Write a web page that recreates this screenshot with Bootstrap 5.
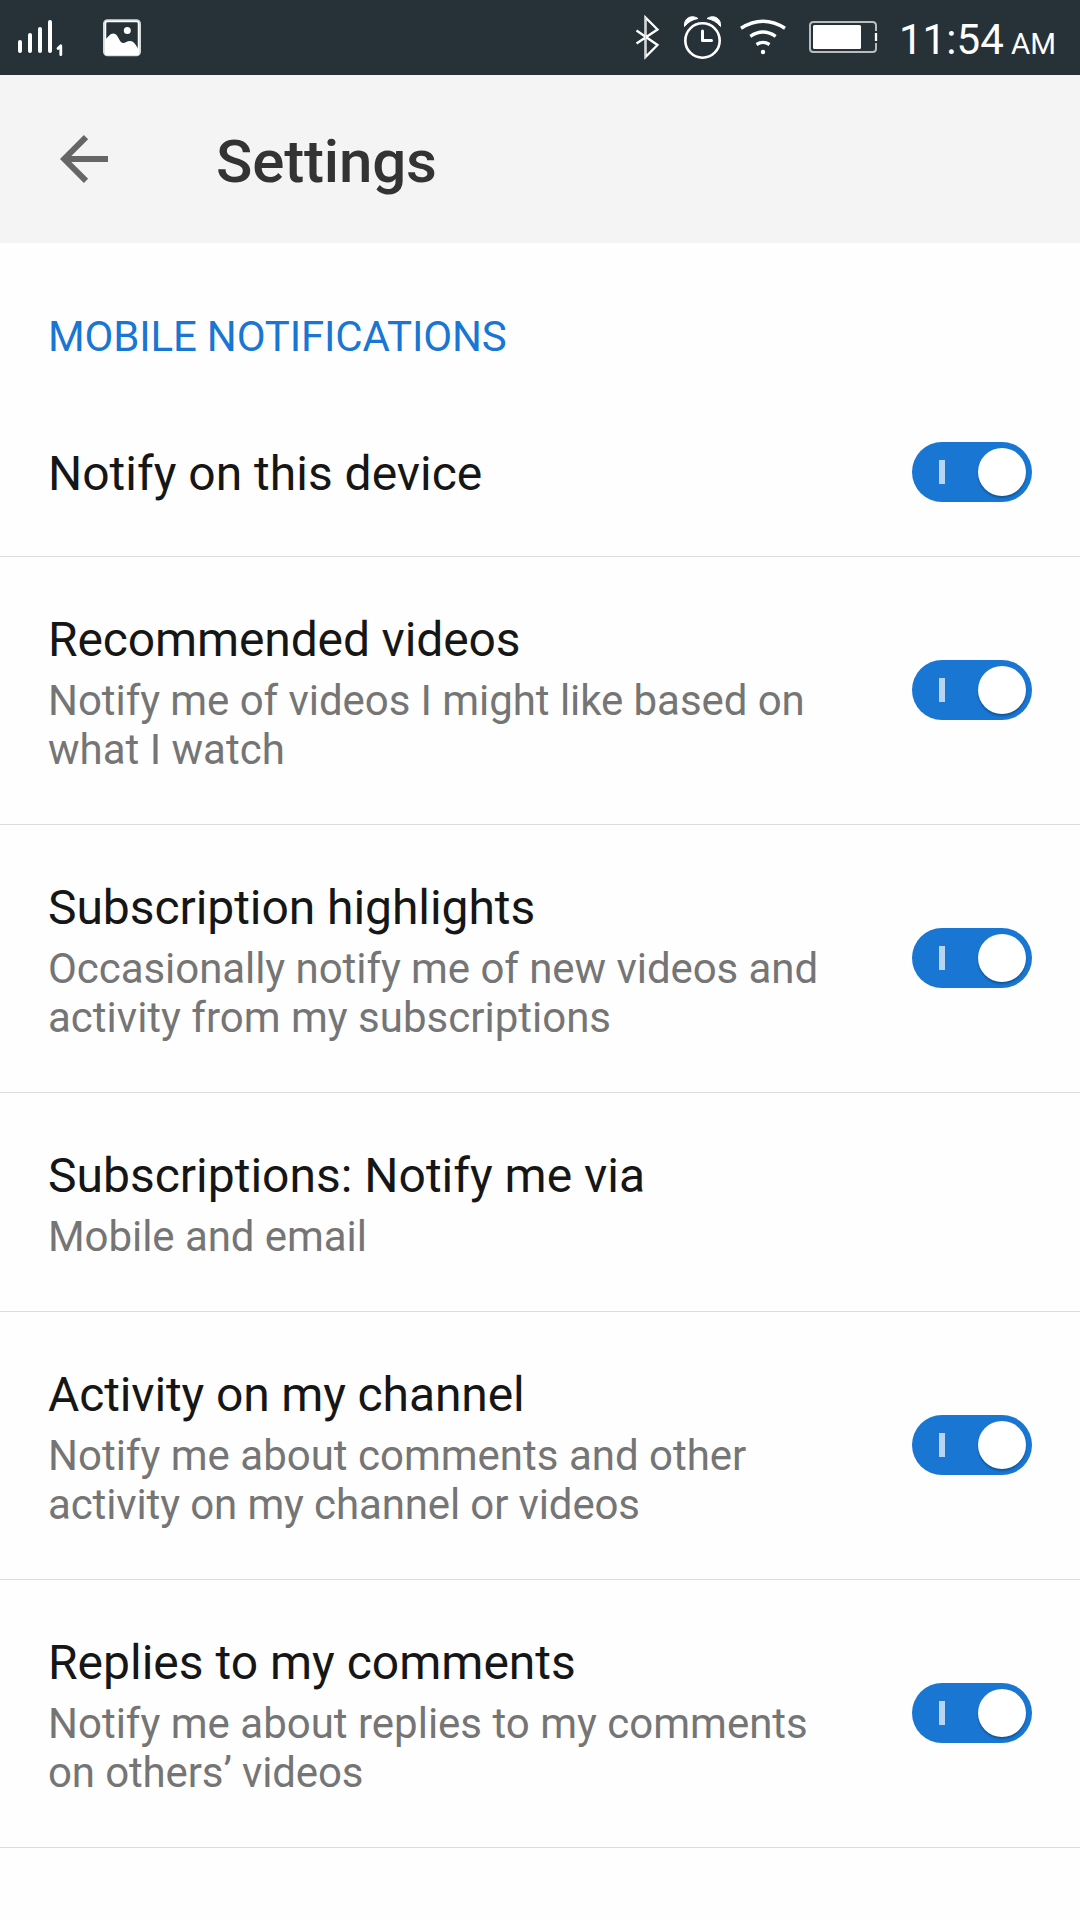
<!DOCTYPE html>
<html lang="en">
<head>
<meta charset="utf-8">
<meta name="viewport" content="width=device-width, initial-scale=1">
<title>Settings</title>
<link href="https://cdn.jsdelivr.net/npm/bootstrap@5.3.0/dist/css/bootstrap.min.css" rel="stylesheet">
<style>
  body { font-family: Roboto, "Noto Sans", sans-serif; background: #fefefe; color: #161616; height: 1920px; overflow: hidden; }
  svg { display: block; flex: none; }
  .status-bar { height: 75px; background: #263238; color: #fff; padding-right: 24px; }
  .clock { padding-top: 15px; }
  .clock-time { font-size: 42px; line-height: 49px; letter-spacing: .1px; }
  .clock-half { font-size: 29.500px; margin-left: 7px; }
  .app-bar { height: 168px; background: #f4f4f4; padding-left: 60px; }
  .app-title { font-size: 60px; line-height: 70px; font-weight: 500; color: #333; margin-left: 108px; padding-top: 5px; letter-spacing: -.15px; }
  .section-title { font-size: 42px; line-height: 49px; letter-spacing: -.17px; color: #1976d2; padding: 69px 48px 27px; }
  .setting { padding: 0 48px; height: 268px; border-bottom: 1px solid #dcdcdc; }
  .setting-short { height: 219px; }
  .setting-single { height: 169px; }
  .setting-text { padding-top: 5px; white-space: nowrap; }
  .setting-single .setting-text { padding-top: 4px; }
  .setting-label { font-size: 48px; line-height: 56px; }
  .setting-note { font-size: 42px; line-height: 49px; color: #757575; margin-top: 8px; }
  .tight { letter-spacing: -.13px; }
  .snug { letter-spacing: -.06px; }
  .toggle { width: 120px; height: 60px; background: #1976d2; padding: 0 6px 0 27px; margin-bottom: 1px; flex: none; }
  .setting-single .toggle { margin-bottom: 0; }
  .toggle-bar { width: 6px; height: 24px; background: #b7d5f2; }
  .toggle-knob { width: 48px; height: 48px; background: #fff; box-shadow: 0 2px 2px rgba(0,0,0,.28); }
</style>
</head>
<body>
<header class="status-bar d-flex justify-content-between">
  <svg width="180" height="75" viewBox="0 0 180 75" fill="#fff" aria-label="Signal and picture">
    <g stroke="#fff" stroke-width="4" stroke-linecap="round"><path d="M20 42v9M30 35v16M40 29v22M50 22v29"/></g>
    <path d="M58 48.500l2.800-2.800v9" fill="none" stroke="#fff" stroke-width="2.800" stroke-linecap="round" stroke-linejoin="round"/>
    <rect x="104" y="20.300" width="36" height="35" rx="3.500" fill="none" stroke="#d5d9da" stroke-width="2"/>
    <rect x="105.500" y="21.500" width="33" height="33" rx="2" fill="none" stroke="#fff" stroke-width="1.500"/>
    <circle cx="127.300" cy="30.500" r="3.500"/>
    <path d="M105 40c3-3 5-6.500 8.500-6.500 5 0 5.500 9.500 9.500 9.500 2.500 0 4-2 7-2 4 0 6.500 5 9 9v3q0 2-2 2h-30q-2 0-2-2z"/>
  </svg>
  <div class="d-flex">
    <svg width="281" height="75" viewBox="610 0 281 75" fill="none" stroke="#fff" aria-label="Bluetooth, alarm, Wi-Fi, battery">
      <path d="M636.500 30.500l21 14.500-12 12V17.500l12 12-21 14" stroke-width="2.300"/>
      <path d="M645.500 17v41" stroke="#d0d5d7" stroke-width="1"/>
      <circle cx="702.500" cy="40.500" r="17.200" stroke-width="2.600"/>
      <path d="M702.500 31v9.500h9" stroke-width="3" stroke-linecap="round" stroke-linejoin="round"/>
      <path d="M684.500 26.500c-1-8 6.500-12.500 13.500-8-5.500 1-10 3.500-13.500 8zM720.500 26.500c1-8-6.500-12.500-13.500-8 5.500 1 10 3.500 13.500 8z" fill="#fff" stroke-width="1"/>
      <path d="M741 28.300q22-14 44 0" stroke-width="3.400"/>
      <path d="M750.300 36.300q12.700-8.500 25.400 0M756.500 44.500q6.500-4.200 13 0" stroke-width="3.300"/>
      <circle cx="763" cy="52" r="2.200" fill="#fff" stroke="none"/>
      <path d="M876 31v-5.500q0-3.500-3.500-3.500h-59q-3.500 0-3.500 3.500v23q0 3.500 3.500 3.500h59q3.500 0 3.500-3.500V43" stroke="#b8bebf" stroke-width="2"/>
      <path d="M876 33v8" stroke-width="2.300"/>
      <rect x="813" y="25" width="48" height="24" rx="1.500" fill="#fff" stroke="none"/>
    </svg>
    <div class="clock d-flex align-items-baseline ps-2 text-nowrap"><span class="clock-time">11:54</span><span class="clock-half">AM</span></div>
  </div>
</header>

<nav class="app-bar d-flex align-items-center">
  <svg width="48" height="48" viewBox="0 0 48 48" fill="none" stroke="#666" stroke-width="6" aria-label="Back"><path d="M48 24H5M26 2.200L4.200 24 26 45.800"/></svg>
  <h1 class="app-title mb-0">Settings</h1>
</nav>

<main>
  <h2 class="section-title mb-0 fw-normal">MOBILE NOTIFICATIONS</h2>
  <section class="setting setting-single d-flex align-items-center justify-content-between">
    <div class="setting-text"><div class="setting-label">Notify on this device</div></div>
    <div class="toggle rounded-pill d-flex align-items-center justify-content-between"><span class="toggle-bar"></span><span class="toggle-knob rounded-circle"></span></div>
  </section>
  <section class="setting d-flex align-items-center justify-content-between">
    <div class="setting-text"><div class="setting-label tight">Recommended videos</div><div class="setting-note"><span class="snug">Notify me of videos I might like based on</span><br>what I watch</div></div>
    <div class="toggle rounded-pill d-flex align-items-center justify-content-between"><span class="toggle-bar"></span><span class="toggle-knob rounded-circle"></span></div>
  </section>
  <section class="setting d-flex align-items-center justify-content-between">
    <div class="setting-text"><div class="setting-label snug">Subscription highlights</div><div class="setting-note"><span class="snug">Occasionally notify me of new videos and</span><br>activity from my subscriptions</div></div>
    <div class="toggle rounded-pill d-flex align-items-center justify-content-between"><span class="toggle-bar"></span><span class="toggle-knob rounded-circle"></span></div>
  </section>
  <section class="setting setting-short d-flex align-items-center">
    <div class="setting-text"><div class="setting-label">Subscriptions: Notify me via</div><div class="setting-note snug">Mobile and email</div></div>
  </section>
  <section class="setting d-flex align-items-center justify-content-between">
    <div class="setting-text"><div class="setting-label tight">Activity on my channel</div><div class="setting-note">Notify me about comments and other<br><span class="tight">activity on my channel or videos</span></div></div>
    <div class="toggle rounded-pill d-flex align-items-center justify-content-between"><span class="toggle-bar"></span><span class="toggle-knob rounded-circle"></span></div>
  </section>
  <section class="setting d-flex align-items-center justify-content-between">
    <div class="setting-text"><div class="setting-label">Replies to my comments</div><div class="setting-note">Notify me about replies to my comments<br><span class="tight">on others’ videos</span></div></div>
    <div class="toggle rounded-pill d-flex align-items-center justify-content-between"><span class="toggle-bar"></span><span class="toggle-knob rounded-circle"></span></div>
  </section>
</main>
<script src="https://cdn.jsdelivr.net/npm/bootstrap@5.3.0/dist/js/bootstrap.bundle.min.js"></script>
</body>
</html>
